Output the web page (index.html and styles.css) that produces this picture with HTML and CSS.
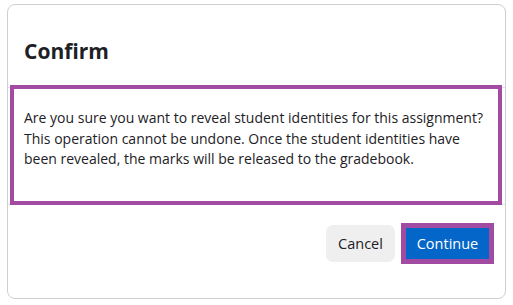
FILE: index.html
```html
<!DOCTYPE html>
<html lang="en">
<head>
<meta charset="utf-8">
<title>Confirm</title>
<link rel="stylesheet" href="styles.css">
</head>
<body>
<div class="modal" role="dialog" aria-labelledby="modal-title">
  <div class="modal-header">
    <h5 class="modal-title" id="modal-title">Confirm</h5>
  </div>
  <div class="modal-body">
    <p class="message">Are you sure you want to reveal student identities for this assignment?<br>This operation cannot be undone. Once the student identities have<br>been revealed, the marks will be released to the gradebook.</p>
  </div>
  <div class="modal-footer">
    <button class="btn btn-secondary" type="button">Cancel</button>
    <button class="btn btn-primary" type="button">Continue</button>
  </div>
</div>
</body>
</html>
```

FILE: styles.css
```css
* { box-sizing: border-box; }

html, body {
  margin: 0;
  background: #ffffff;
}

body {
  padding: 4px 7px 6px 7px;
  font-family: "Open Sans", "Noto Sans", sans-serif;
  color: #1d2125;
}

.modal {
  width: 499px;
  height: 295px;
  border: 1px solid #cfcfcf;
  border-radius: 8px;
  background: #fff;
  display: flex;
  flex-direction: column;
}

.modal-header {
  height: 83px;
  padding: 32px 16px 0 16px;
  border-bottom: 1px solid #dee2e6;
}

.modal-title {
  margin: 0;
  font-size: 21px;
  line-height: 28px;
  font-weight: 700;
  color: #1d2125;
}

.modal-body {
  position: relative;
  height: 117px;
  padding: 20px 16px 0 16px;
  border-bottom: 1px solid #dee2e6;
}

.modal-body::after {
  content: "";
  position: absolute;
  top: -3px;
  left: 2px;
  right: 3px;
  bottom: -1px;
  border: 4px solid #a24ba3;
  pointer-events: none;
}

.message {
  margin: 0;
  font-size: 14px;
  line-height: 20.7px;
  white-space: nowrap;
}

.modal-footer {
  flex: 1;
  display: flex;
  justify-content: flex-end;
  align-items: flex-start;
  gap: 8px;
  padding: 20px 13px 0 0;
}

.btn {
  height: 37px;
  border: none;
  font-family: inherit;
  font-size: 14.5px;
  line-height: 20px;
  padding: 0 8px;
  cursor: pointer;
}

.btn-secondary {
  width: 69px;
  background: #efefef;
  color: #1d2125;
  border-radius: 7px;
}

.btn-primary {
  width: 89px;
  background: #0466c8;
  color: #fff;
  border-radius: 0;
  box-shadow: 0 0 0 2px #a24ba3, inset 0 0 0 3px #a24ba3;
}
```
